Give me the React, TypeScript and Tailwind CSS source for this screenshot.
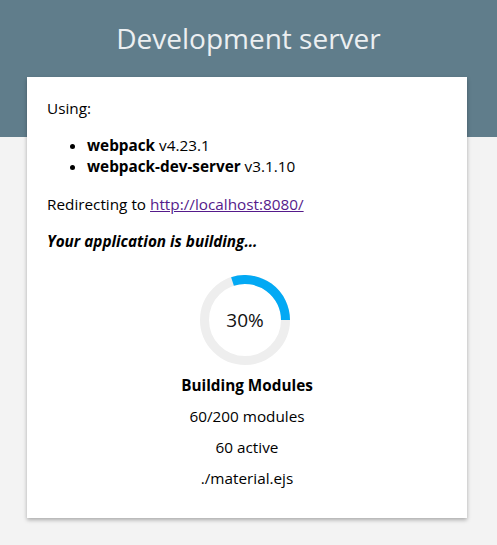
import React from "react";

const font = { fontFamily: '"Segoe UI", "Open Sans", "Noto Sans", sans-serif' };

function Ring() {
  const r = 40.5;
  const cx = 45;
  const cy = 45;
  const a0 = (-18 * Math.PI) / 180;
  const a1 = (90 * Math.PI) / 180;
  const p = (a: number) => [cx + r * Math.sin(a), cy - r * Math.cos(a)];
  const [x0, y0] = p(a0);
  const [x1, y1] = p(a1);
  return (
    <div className="relative w-[90px] h-[90px] mr-[4px]">
      <svg width="90" height="90" viewBox="0 0 90 90" className="absolute inset-0">
        <circle cx={cx} cy={cy} r={r} fill="none" stroke="#eeeeee" strokeWidth="9" />
        <path d={`M ${x0} ${y0} A ${r} ${r} 0 0 1 ${x1} ${y1}`} fill="none" stroke="#03a9f4" strokeWidth="9" />
      </svg>
      <div className="absolute inset-0 flex items-center justify-center text-[19px] text-[#111]">30%</div>
    </div>
  );
}

export default function App() {
  return (
    <div className="min-h-[545px] bg-[#f3f3f3]" style={font}>
      <div className="h-[137px] bg-[#607d8b] pt-[18px]">
        <h1 className="text-center text-[28px] leading-[40px] text-[#eceff1] font-normal">Development server</h1>
      </div>
      <div className="-mt-[60px] ml-[27px] mr-[30px] bg-white shadow-[0_2px_4px_rgba(0,0,0,0.3)] px-[20px] pt-[20px] pb-[29px] text-[15.3px] leading-[22px] text-black">
        <p>Using:</p>
        <ul className="list-disc pl-[40px] mt-[16px]">
          <li className="leading-[21px]"><strong>webpack</strong> v4.23.1</li>
          <li className="leading-[21px]"><strong>webpack-dev-server</strong> v3.1.10</li>
        </ul>
        <p className="mt-[16px]">Redirecting to <a href="#" className="underline text-[#551a8b]">http://localhost:8080/</a></p>
        <p className="mt-[15px] font-bold italic">Your application is building...</p>
        <div className="flex flex-col items-center mt-[23px]">
          <Ring />
          <div className="mt-[9px] font-bold leading-[22px]">Building Modules</div>
          <div className="mt-[9px] leading-[22px]">60/200 modules</div>
          <div className="mt-[9px] leading-[22px]">60 active</div>
          <div className="mt-[9px] leading-[22px]">./material.ejs</div>
        </div>
      </div>
    </div>
  );
}
